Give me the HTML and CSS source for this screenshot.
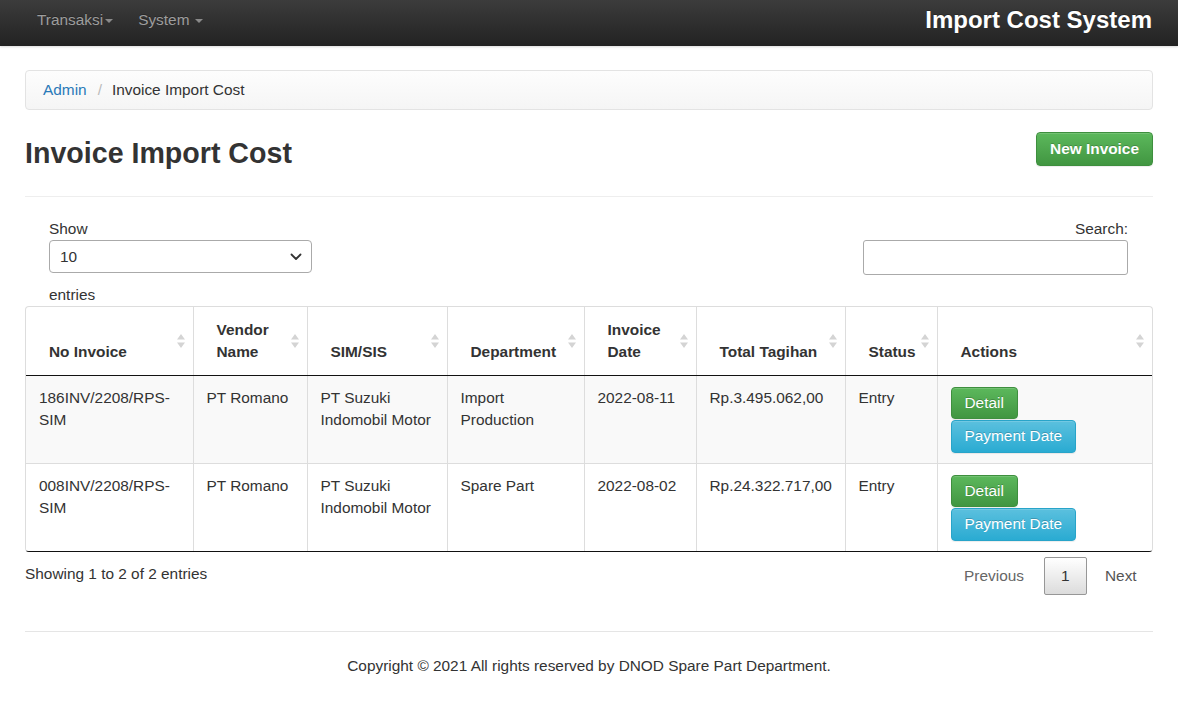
FILE: index.html
```html
<!DOCTYPE html>
<html lang="id">
<head>
<meta charset="utf-8">
<title>Invoice Import Cost</title>
<link rel="stylesheet" href="styles.css">
</head>
<body>
<nav class="navbar">
  <div class="nav-left">
    <a class="nav-link">Transaksi<span class="caret"></span></a>
    <a class="nav-link">System<span class="caret spaced"></span></a>
  </div>
  <div class="brand">Import Cost System</div>
</nav>

<main class="container">
  <div class="breadcrumb">
    <a class="crumb-link">Admin</a>
    <span class="crumb-sep">/</span>
    <span class="crumb-active">Invoice Import Cost</span>
  </div>

  <div class="page-header">
    <h1 class="page-title">Invoice Import Cost</h1>
    <button class="btn btn-success btn-bold">New Invoice</button>
  </div>

  <div class="controls">
    <div class="length">
      <div class="ctl-label">Show</div>
      <div class="select">
        <span>10</span>
        <svg width="12" height="8" viewBox="0 0 12 8"><path d="M1.5 1.5 L6 6 L10.5 1.5" fill="none" stroke="#333" stroke-width="1.8" stroke-linecap="round" stroke-linejoin="round"/></svg>
      </div>
      <div class="ctl-label entries">entries</div>
    </div>
    <div class="search">
      <div class="ctl-label">Search:</div>
      <div class="input"></div>
    </div>
  </div>

  <div class="table-wrap">
    <table class="data">
      <colgroup>
        <col class="c1"><col class="c2"><col class="c3"><col class="c4"><col class="c5"><col class="c6"><col class="c7"><col class="c8">
      </colgroup>
      <thead>
        <tr>
          <th>No Invoice<span class="sort"><svg width="8" height="16" viewBox="0 0 8 16"><path d="M4 1 L8 6.5 L0 6.5 Z M4 15 L8 9.5 L0 9.5 Z" fill="#d4d4d4"/></svg></span></th>
          <th>Vendor Name<span class="sort"><svg width="8" height="16" viewBox="0 0 8 16"><path d="M4 1 L8 6.5 L0 6.5 Z M4 15 L8 9.5 L0 9.5 Z" fill="#d4d4d4"/></svg></span></th>
          <th>SIM/SIS<span class="sort"><svg width="8" height="16" viewBox="0 0 8 16"><path d="M4 1 L8 6.5 L0 6.5 Z M4 15 L8 9.5 L0 9.5 Z" fill="#d4d4d4"/></svg></span></th>
          <th>Department<span class="sort"><svg width="8" height="16" viewBox="0 0 8 16"><path d="M4 1 L8 6.5 L0 6.5 Z M4 15 L8 9.5 L0 9.5 Z" fill="#d4d4d4"/></svg></span></th>
          <th>Invoice Date<span class="sort"><svg width="8" height="16" viewBox="0 0 8 16"><path d="M4 1 L8 6.5 L0 6.5 Z M4 15 L8 9.5 L0 9.5 Z" fill="#d4d4d4"/></svg></span></th>
          <th class="nowrap">Total Tagihan<span class="sort"><svg width="8" height="16" viewBox="0 0 8 16"><path d="M4 1 L8 6.5 L0 6.5 Z M4 15 L8 9.5 L0 9.5 Z" fill="#d4d4d4"/></svg></span></th>
          <th>Status<span class="sort"><svg width="8" height="16" viewBox="0 0 8 16"><path d="M4 1 L8 6.5 L0 6.5 Z M4 15 L8 9.5 L0 9.5 Z" fill="#d4d4d4"/></svg></span></th>
          <th>Actions<span class="sort"><svg width="8" height="16" viewBox="0 0 8 16"><path d="M4 1 L8 6.5 L0 6.5 Z M4 15 L8 9.5 L0 9.5 Z" fill="#d4d4d4"/></svg></span></th>
        </tr>
      </thead>
      <tbody>
        <tr class="odd">
          <td>186INV/2208/RPS-SIM</td>
          <td>PT Romano</td>
          <td>PT Suzuki Indomobil Motor</td>
          <td>Import Production</td>
          <td>2022-08-11</td>
          <td class="nowrap">Rp.3.495.062,00</td>
          <td>Entry</td>
          <td><div class="actions"><button class="btn btn-success">Detail</button><button class="btn btn-info">Payment Date</button></div></td>
        </tr>
        <tr class="even">
          <td>008INV/2208/RPS-SIM</td>
          <td>PT Romano</td>
          <td>PT Suzuki Indomobil Motor</td>
          <td>Spare Part</td>
          <td>2022-08-02</td>
          <td class="nowrap">Rp.24.322.717,00</td>
          <td>Entry</td>
          <td><div class="actions"><button class="btn btn-success">Detail</button><button class="btn btn-info">Payment Date</button></div></td>
        </tr>
      </tbody>
    </table>
  </div>

  <div class="table-footer">
    <div class="info">Showing 1 to 2 of 2 entries</div>
    <div class="paginate">
      <span class="page-btn disabled">Previous</span>
      <span class="page-btn current">1</span>
      <span class="page-btn next">Next</span>
    </div>
  </div>

  <footer class="footer">Copyright © 2021 All rights reserved by DNOD Spare Part Department.</footer>
</main>
</body>
</html>
```

FILE: styles.css
```css
* { box-sizing: border-box; }

body {
  margin: 0;
  font-family: "Liberation Sans", Arial, Helvetica, sans-serif;
  font-size: 15.4px;
  line-height: 22px;
  color: #333;
  background: #fff;
}

/* navbar */
.navbar {
  height: 46px;
  background: linear-gradient(to bottom, #3c3c3c 0%, #222 100%);
  display: flex;
  justify-content: space-between;
  align-items: flex-start;
  padding: 0 26px 0 22px;
  box-shadow: 0 1px 2px rgba(0,0,0,0.15);
}
.nav-left { display: flex; }
.nav-link {
  color: #9d9d9d;
  padding: 9px 12px 0 15px;
  text-shadow: 0 -1px 0 rgba(0,0,0,.25);
  display: flex;
  align-items: center;
  height: 31px;
}
.nav-link + .nav-link { padding-left: 13px; }
.caret {
  display: inline-block;
  width: 0;
  height: 0;
  margin-left: 2px;
  border-top: 4px solid #8a8a8a;
  border-left: 4px solid transparent;
  border-right: 4px solid transparent;
  margin-top: 2px;
}
.caret.spaced { margin-left: 6px; }
.brand {
  color: #fff;
  font-weight: bold;
  font-size: 24px;
  line-height: 28px;
  padding-top: 6px;
  text-shadow: 0 -1px 0 rgba(0,0,0,.25);
}

/* container */
.container { padding: 0 25px; }

.breadcrumb {
  margin-top: 24px;
  padding: 8px 17px;
  border: 1px solid #e3e3e3;
  border-radius: 4px;
  background: linear-gradient(to bottom, #fdfdfd 0%, #f5f5f5 100%);
  display: flex;
  align-items: center;
}
.crumb-link { color: #2a7ab8; }
.crumb-sep { color: #bbb; padding: 0 10px 0 11px; }
.crumb-active { color: #333; }

.page-header {
  margin-top: 22px;
  display: flex;
  justify-content: space-between;
  align-items: flex-start;
  padding-bottom: 27px;
  border-bottom: 1px solid #eee;
}
.page-title {
  margin: 5px 0 0 0;
  font-size: 28.6px;
  line-height: 32px;
  font-weight: bold;
  color: #333;
}

/* buttons */
.btn {
  font-family: inherit;
  font-size: 15.4px;
  line-height: 20px;
  padding: 5px 13px;
  border-radius: 4px;
  border: 1px solid transparent;
  color: #fff;
  text-shadow: 0 -1px 0 rgba(0,0,0,.2);
  box-shadow: inset 0 1px 0 rgba(255,255,255,.15), 0 1px 1px rgba(0,0,0,.075);
  cursor: pointer;
}
.btn-bold { font-weight: bold; padding: 6px 13px; }
.btn-success {
  background: linear-gradient(to bottom, #5cb85c 0%, #419641 100%);
  border-color: #3e8f3e;
}
.btn-info {
  background: linear-gradient(to bottom, #5bc0de 0%, #2aabd2 100%);
  border-color: #28a4c9;
  padding: 5px 13px 6px;
}

/* controls */
.controls {
  display: flex;
  justify-content: space-between;
  padding: 21px 25px 0 24px;
}
.ctl-label { line-height: 22px; }
.entries { margin-top: 11px; }
.select {
  width: 263px;
  height: 33px;
  border: 1px solid #aaa;
  border-radius: 4px;
  display: flex;
  justify-content: space-between;
  align-items: center;
  padding: 0 9px 0 10px;
}
.search { display: flex; flex-direction: column; align-items: flex-end; }
.input {
  width: 265px;
  height: 35px;
  border: 1px solid #aaa;
  border-radius: 3px;
  background: #fff;
}

/* table */
.table-wrap {
  border: 1px solid #ddd;
  border-bottom-color: #111;
  border-radius: 4px;
  overflow: hidden;
}
.data {
  width: 100%;
  border-collapse: collapse;
  table-layout: fixed;
}
.c1 { width: 167px; }
.c2 { width: 114px; }
.c3 { width: 140px; }
.c4 { width: 137px; }
.c5 { width: 112px; }
.c6 { width: 149px; }
.c7 { width: 92px; }
.c8 { width: 215px; }

.data th {
  position: relative;
  text-align: left;
  vertical-align: bottom;
  font-weight: bold;
  padding: 12px 20px 12px 23px;
  border-left: 1px solid #ddd;
  border-bottom: 1px solid #111;
}
.data .nowrap { white-space: nowrap; }
.data th:first-child, .data td:first-child { border-left: none; }
.sort {
  position: absolute;
  right: 8px;
  top: 50%;
  margin-top: -8px;
  width: 8px;
  height: 16px;
  display: block;
}
.sort svg { display: block; }
.data td {
  vertical-align: top;
  padding: 11px 12px 10px 13px;
  border-left: 1px solid #ddd;
  border-top: 1px solid #ddd;
  word-wrap: break-word;
}
.data thead + tbody tr:first-child td { border-top: none; }
.data tr.odd td { background: #f9f9f9; }
.data tr.even td { background: #fff; }
.actions {
  display: flex;
  flex-direction: column;
  align-items: flex-start;
  gap: 1px;
}

/* footer of table */
.table-footer {
  display: flex;
  justify-content: space-between;
  align-items: flex-start;
}
.info { padding-top: 11px; }
.paginate { display: flex; margin-top: 5px; }
.page-btn {
  padding: 7px 15.4px 7px;
  margin-left: 2px;
  line-height: 22px;
  border: 1px solid transparent;
  border-radius: 2px;
  color: #333;
}
.page-btn.disabled { color: #666; padding-right: 17px; }
.page-btn.next { color: #555; }
.page-btn.current {
  border-color: #979797;
  background: linear-gradient(to bottom, #fff 0%, #dcdcdc 100%);
  padding: 7px 16px;
}

.footer {
  margin-top: 36px;
  border-top: 1px solid #e5e5e5;
  padding-top: 23px;
  text-align: center;
}
```
